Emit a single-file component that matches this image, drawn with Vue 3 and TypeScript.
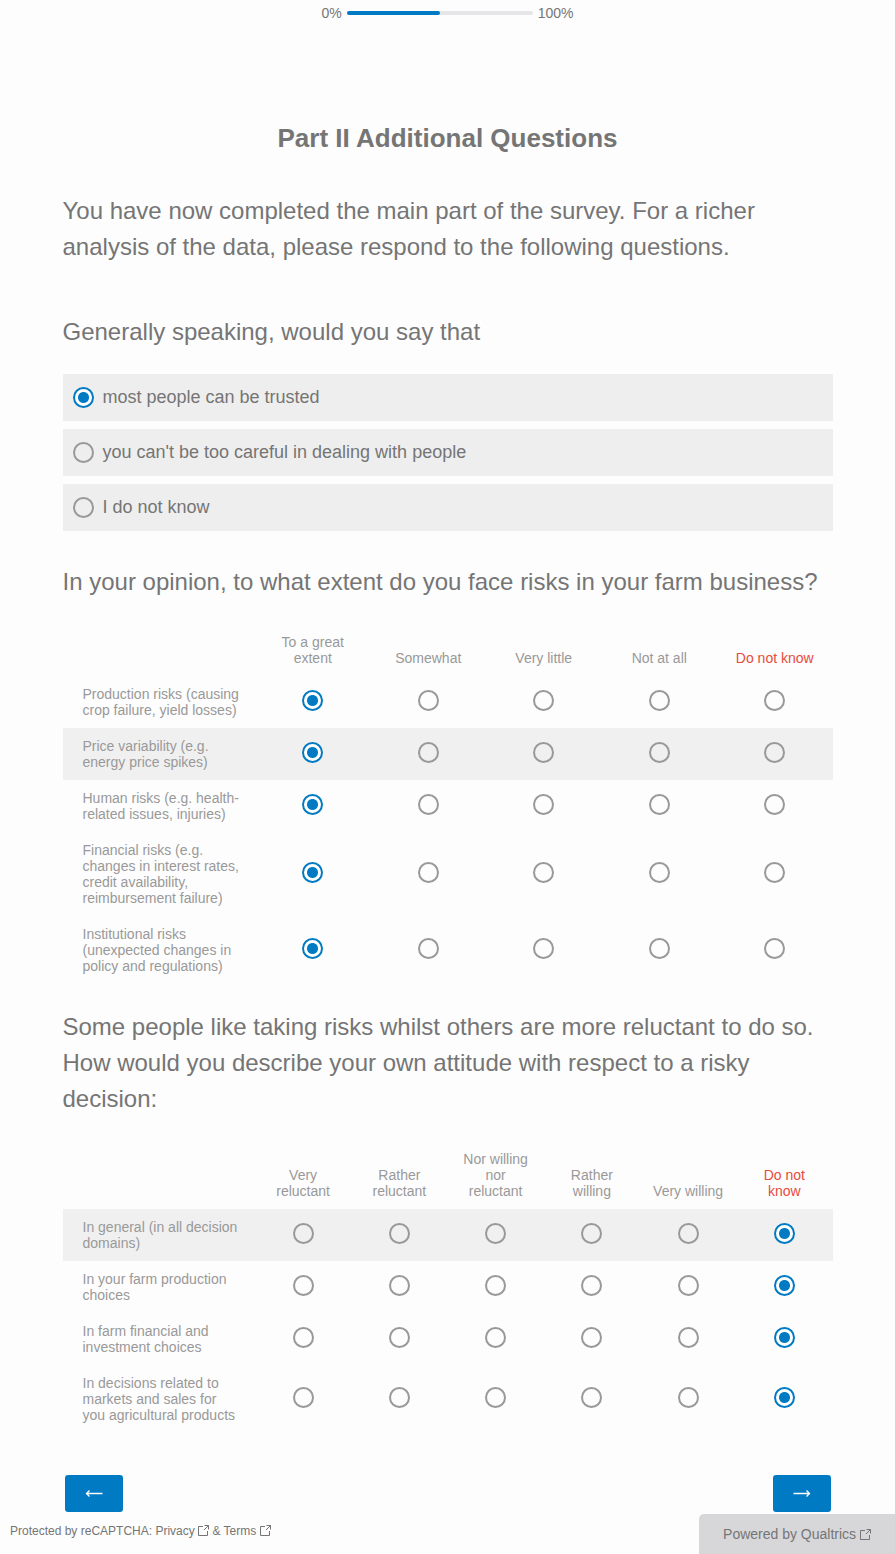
<script setup lang="ts">
import { reactive, ref } from 'vue'

interface Matrix {
  id: string
  question: string
  columns: string[]
  rows: string[]
  shade: number
}

const trustOptions: string[] = [
  'most people can be trusted',
  "you can't be too careful in dealing with people",
  'I do not know',
]
const trust = ref(0)

const matrices: Matrix[] = [
  {
    id: 'risk',
    question: 'In your opinion, to what extent do you face risks in your farm business?',
    columns: ['To a great extent', 'Somewhat', 'Very little', 'Not at all', 'Do not know'],
    rows: [
      'Production risks (causing crop failure, yield losses)',
      'Price variability (e.g. energy price spikes)',
      'Human risks (e.g. health-related issues, injuries)',
      'Financial risks (e.g. changes in interest rates, credit availability, reimbursement failure)',
      'Institutional risks (unexpected changes in policy and regulations)',
    ],
    shade: 1,
  },
  {
    id: 'attitude',
    question:
      'Some people like taking risks whilst others are more reluctant to do so. How would you describe your own attitude with respect to a risky decision:',
    columns: ['Very reluctant', 'Rather reluctant', 'Nor willing nor reluctant', 'Rather willing', 'Very willing', 'Do not know'],
    rows: [
      'In general (in all decision domains)',
      'In your farm production choices',
      'In farm financial and investment choices',
      'In decisions related to markets and sales for you agricultural products',
    ],
    shade: 0,
  },
]

const answers = reactive<Record<string, number[]>>({
  risk: [0, 0, 0, 0, 0],
  attitude: [5, 5, 5, 5],
})

const progress = 50
const externalIcon = 'M5 1.5H0.5V10.5H9.5V6M6.5 0.5H10.5V4.5M10.5 0.5L6 5'
</script>

<template>
  <div class="page">
    <div class="progress">
      <span>0%</span>
      <div class="track" role="progressbar" :aria-valuenow="progress" aria-valuemin="0" aria-valuemax="100">
        <div class="fill" :style="{ width: progress + '%' }"></div>
      </div>
      <span>100%</span>
    </div>

    <main class="survey">
      <h1>Part II Additional Questions</h1>
      <p class="intro">
        You have now completed the main part of the survey. For a richer analysis of the data, please respond to the
        following questions.
      </p>

      <fieldset class="question">
        <legend class="prompt">Generally speaking, would you say that</legend>
        <div class="options">
          <label v-for="(option, i) in trustOptions" :key="option" class="option">
            <input v-model="trust" class="radio" type="radio" name="trust" :value="i" />
            <span class="option-text">{{ option }}</span>
          </label>
        </div>
      </fieldset>

      <section v-for="m in matrices" :key="m.id" class="question">
        <h2 :id="m.id" class="prompt">{{ m.question }}</h2>
        <table :aria-labelledby="m.id">
          <thead>
            <tr>
              <td class="corner"></td>
              <th
                v-for="(column, c) in m.columns"
                :id="`${m.id}-col-${c}`"
                :key="column"
                scope="col"
                :class="{ unknown: c === m.columns.length - 1 }"
              >
                {{ column }}
              </th>
            </tr>
          </thead>
          <tbody>
            <tr v-for="(row, r) in m.rows" :key="row" :class="{ shaded: r === m.shade }">
              <th :id="`${m.id}-row-${r}`" scope="row">{{ row }}</th>
              <td v-for="(column, c) in m.columns" :key="column" class="choice">
                <input
                  v-model="answers[m.id][r]"
                  class="radio"
                  type="radio"
                  :name="`${m.id}-${r}`"
                  :value="c"
                  :aria-labelledby="`${m.id}-row-${r} ${m.id}-col-${c}`"
                />
              </td>
            </tr>
          </tbody>
        </table>
      </section>

      <nav class="buttons">
        <button type="button" aria-label="←">
          <svg class="arrow" viewBox="0 0 18 9" aria-hidden="true"><path d="M17.5 4.5H1.5M4.5 1.5L1.5 4.5L4.5 7.5" /></svg>
        </button>
        <button type="button" aria-label="→">
          <svg class="arrow" viewBox="0 0 18 9" aria-hidden="true"><path d="M0.5 4.5H16.5M13.5 1.5L16.5 4.5L13.5 7.5" /></svg>
        </button>
      </nav>
    </main>

    <footer>
      <p class="captcha">
        Protected by reCAPTCHA:
        <a href="#">Privacy <svg class="ext" viewBox="0 0 11 11" aria-hidden="true"><path :d="externalIcon" /></svg></a>
        &amp;
        <a href="#">Terms <svg class="ext" viewBox="0 0 11 11" aria-hidden="true"><path :d="externalIcon" /></svg></a>
      </p>
      <a class="powered" href="#">Powered by Qualtrics <svg class="ext" viewBox="0 0 11 11" aria-hidden="true"><path :d="externalIcon" /></svg></a>
    </footer>
  </div>
</template>

<style>
body {
  background: #fdfdfd;
}
</style>

<style scoped>
.page {
  color: #757575;
  font-family: "Liberation Sans", Arial, sans-serif;
}

.progress {
  display: flex;
  align-items: center;
  justify-content: center;
  gap: 5px;
  padding-top: 5px;
  font-size: 14px;
  line-height: 16px;
}

.track {
  width: 186px;
  height: 4px;
  border-radius: 2px;
  background: #e6e6e8;
}

.fill {
  height: 100%;
  border-radius: 2px;
  background: #007ac3;
}

.survey {
  box-sizing: border-box;
  width: 100%;
  max-width: 770px;
  margin: 0 auto;
  padding-top: 97px;
}

h1 {
  margin: 0 0 35px;
  font-size: 26px;
  line-height: 40px;
  text-align: center;
}

.intro,
.prompt {
  margin: 0;
  padding: 0;
  font-size: 24px;
  font-weight: 400;
  line-height: 36px;
}

.intro {
  margin-bottom: 49px;
}

.question {
  margin: 0 0 25px;
  padding: 0;
  border: 0;
  min-width: 0;
}

fieldset.question {
  margin-bottom: 33px;
}

.options {
  display: flex;
  flex-direction: column;
  gap: 8px;
  margin-top: 24px;
}

.option {
  display: flex;
  align-items: center;
  gap: 9px;
  min-height: 47px;
  padding: 0 10px;
  background: #eee;
  font-size: 18px;
  line-height: 24px;
}

.option-text {
  padding-bottom: 2px;
}

.radio {
  flex: none;
  box-sizing: border-box;
  width: 21px;
  height: 21px;
  margin: 0;
  border: 2px solid #999;
  border-radius: 50%;
  appearance: none;
  background: transparent;
}

.radio:checked {
  border-color: #007ac3;
  background: radial-gradient(circle, #007ac3 5px, #fff 6px);
}

table {
  width: 100%;
  margin-top: 24px;
  border-collapse: collapse;
  table-layout: fixed;
  color: #999;
  font-size: 14px;
  line-height: 16px;
}

.corner {
  width: 25%;
  padding: 0;
}

th {
  padding: 10px;
  font-weight: 400;
}

thead th {
  vertical-align: bottom;
}

.unknown {
  color: #e74c3c;
}

tbody th {
  padding-right: 14px;
  padding-left: 20px;
  text-align: left;
}

.choice {
  padding: 0 0 4px;
  text-align: center;
  vertical-align: middle;
}

.choice .radio {
  display: block;
  margin: 0 auto;
}

.shaded {
  background: #f0f0f0;
}

.buttons {
  display: flex;
  justify-content: space-between;
  padding: 17px 2px 0;
}

button {
  display: flex;
  align-items: center;
  justify-content: center;
  width: 58px;
  height: 37px;
  padding: 0;
  border: 0;
  border-radius: 3px;
  background: #007ac3;
  color: #fff;
}

.arrow {
  width: 18px;
  height: 9px;
  fill: none;
  stroke: currentColor;
  stroke-width: 1.3;
}

footer {
  display: flex;
  align-items: stretch;
  justify-content: space-between;
  margin-top: 2px;
}

footer a {
  color: inherit;
  text-decoration: none;
}

.captcha {
  margin: 0;
  padding: 9px 0 0 10px;
  font-size: 12px;
  line-height: 16px;
}

.ext {
  width: 11px;
  height: 11px;
  fill: none;
  stroke: currentColor;
  vertical-align: -1px;
}

.powered {
  padding: 12px 24px;
  border-top-left-radius: 5px;
  background: #d7d7d9;
  font-size: 14px;
  line-height: 16px;
}
</style>
